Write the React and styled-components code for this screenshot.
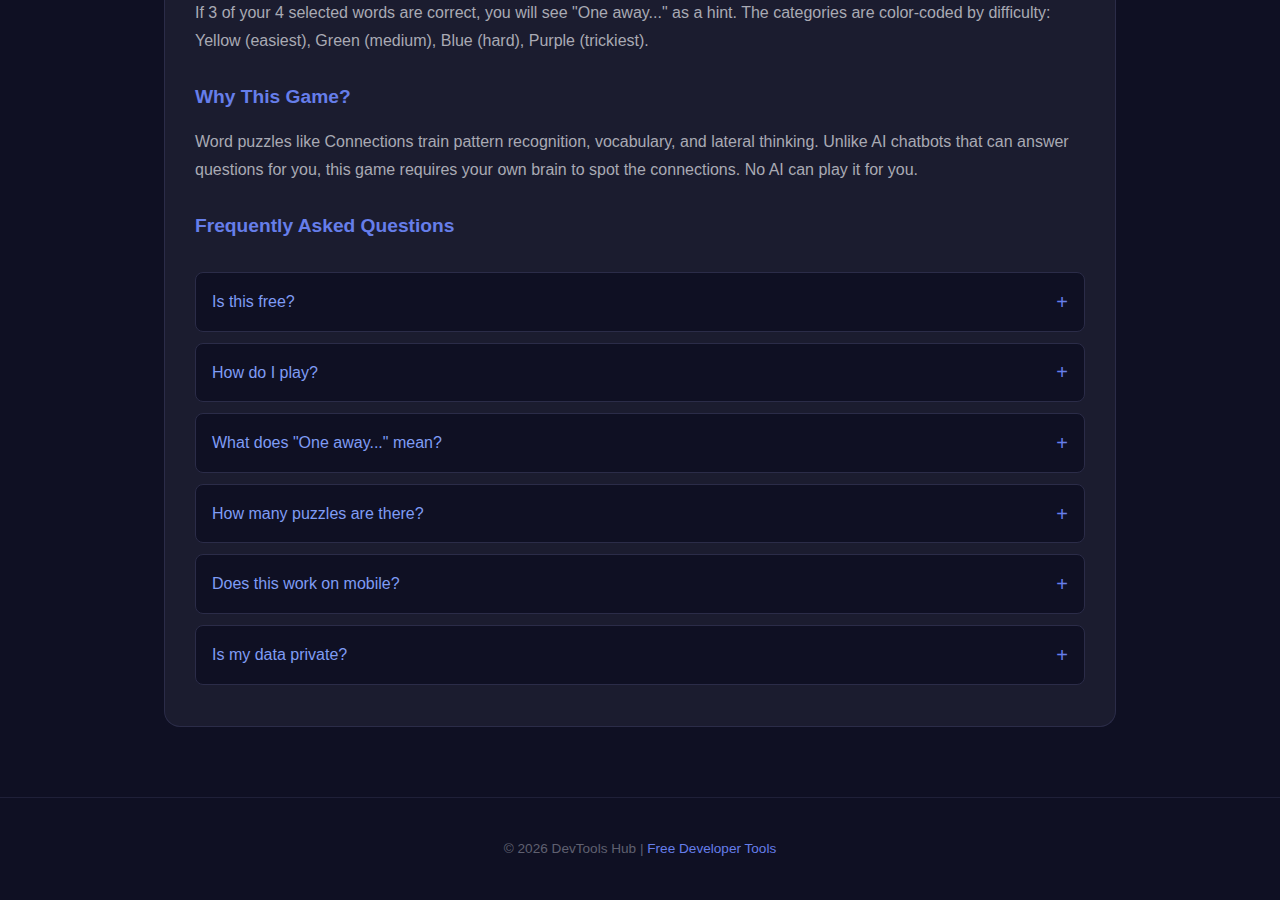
import React from 'react';
import styled, { createGlobalStyle } from 'styled-components';

const GlobalStyle = createGlobalStyle`
  html, body {
    margin: 0;
    padding: 0;
    background: #0f1023;
  }
  body {
    font-family: "Liberation Sans", Arial, sans-serif;
    color: #a8a9b6;
  }
  * {
    box-sizing: border-box;
  }
`;

const Page = styled.div`
  min-height: 100vh;
  display: flex;
  flex-direction: column;
`;

// page is scrolled: the card starts above the viewport
const Main = styled.main`
  width: 952px;
  margin: -1px auto 70px;
`;

const Card = styled.section`
  background: #1b1c2f;
  border: 1px solid #2b2c48;
  border-top: none;
  border-radius: 0 0 16px 16px;
  padding: 0 30px 30px;
`;

const Text = styled.p`
  margin: 0 0 15px;
  font-size: 16px;
  line-height: 28px;
  color: #a9aab4;
`;

const Heading = styled.h2`
  margin: 31px 0 20px;
  font-size: 19.2px;
  line-height: 22px;
  font-weight: 700;
  color: #667eea;
`;

const FaqList = styled.div`
  padding-top: 15px;
  display: flex;
  flex-direction: column;
`;

const FaqItem = styled.div`
  background: #0f1023;
  border: 1px solid #2b2c48;
  border-radius: 8px;
  margin-bottom: 11px;
`;

const Question = styled.button`
  width: 100%;
  display: flex;
  align-items: center;
  justify-content: space-between;
  background: none;
  border: none;
  padding: 16px;
  font-family: inherit;
  font-size: 16px;
  line-height: 25.6px;
  color: #7f9cf5;
  text-align: left;
  cursor: pointer;
`;

const Plus = styled.span`
  font-size: 20px;
  line-height: 1;
  color: #667eea;
  font-weight: 300;
`;

const Footer = styled.footer`
  border-top: 1px solid #1f2038;
  padding: 41px 20px 40px;
  text-align: center;
  font-size: 13.6px;
  line-height: 20px;
  color: #5f6070;
`;

const FooterLink = styled.a`
  color: #667eea;
  text-decoration: none;
`;

const faqs = [
  'Is this free?',
  'How do I play?',
  'What does "One away..." mean?',
  'How many puzzles are there?',
  'Does this work on mobile?',
  'Is my data private?',
];

export default function App() {
  return (
    <Page>
      <GlobalStyle />
      <Main>
        <Card>
          <Text>
            If 3 of your 4 selected words are correct, you will see "One away..." as a hint. The categories are color-coded by difficulty: Yellow (easiest), Green (medium), Blue (hard), Purple (trickiest).
          </Text>
          <Heading>Why This Game?</Heading>
          <Text>
            Word puzzles like Connections train pattern recognition, vocabulary, and lateral thinking. Unlike AI chatbots that can answer questions for you, this game requires your own brain to spot the connections. No AI can play it for you.
          </Text>
          <Heading>Frequently Asked Questions</Heading>
          <FaqList>
            {faqs.map((q) => (
              <FaqItem key={q}>
                <Question>
                  <span>{q}</span>
                  <Plus>+</Plus>
                </Question>
              </FaqItem>
            ))}
          </FaqList>
        </Card>
      </Main>
      <Footer>
        © 2026 DevTools Hub | <FooterLink href="#">Free Developer Tools</FooterLink>
      </Footer>
    </Page>
  );
}
